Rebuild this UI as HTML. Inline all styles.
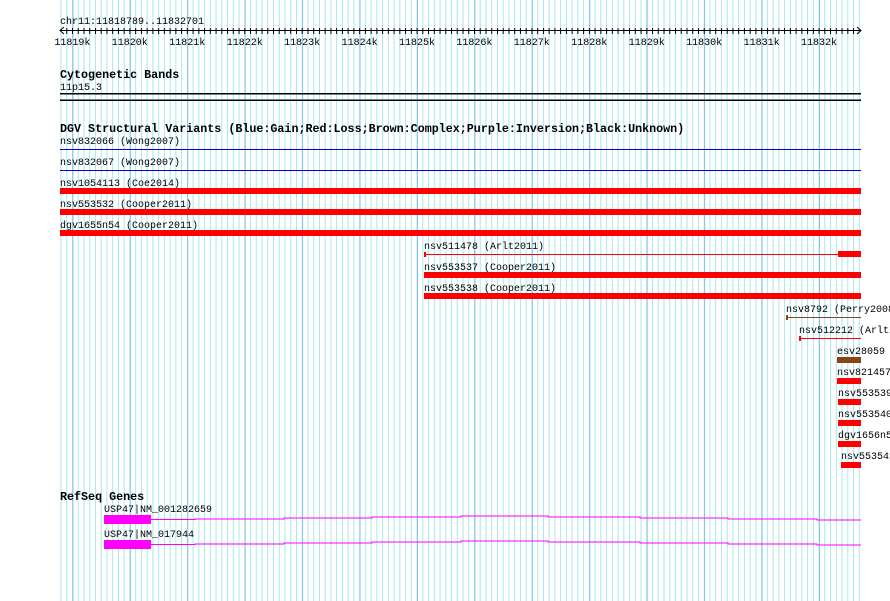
<!DOCTYPE html>
<html><head><meta charset="utf-8"><style>
html,body{margin:0;padding:0;background:#fff;width:890px;height:601px;overflow:hidden}
svg{display:block}
text{font-family:"Liberation Mono","DejaVu Sans Mono",monospace;font-size:10px;fill:#000}
.b{font-weight:bold;font-size:11.7px}
</style></head><body>
<svg width="890" height="601" xmlns="http://www.w3.org/2000/svg">
<defs>
<pattern id="mn" patternUnits="userSpaceOnUse" x="60.5" y="0" width="5.743" height="601"><rect x="0" y="0" width="1" height="601" fill="#a8e6ee"/></pattern>
<pattern id="mj" patternUnits="userSpaceOnUse" x="72.4" y="0" width="57.43" height="601"><rect x="0" y="0" width="1" height="601" fill="#86c2ec"/></pattern>
<pattern id="tk" patternUnits="userSpaceOnUse" x="60.5" y="0" width="5.743" height="40"><rect x="0" y="28" width="1" height="6" fill="#000"/></pattern>
</defs>
<rect x="59" y="0" width="802" height="601" fill="url(#mn)"/>
<rect x="59" y="0" width="802" height="601" fill="url(#mj)"/>
<!-- ruler -->
<text x="60" y="24">chr11:11818789..11832701</text>
<rect x="60" y="30" width="801" height="1" fill="#000"/>
<rect x="62" y="28" width="797" height="6" fill="url(#tk)"/>
<path d="M64 27 L60 30.5 L64 34 M857 27 L861 30.5 L857 34" stroke="#000" fill="none"/>
<g text-anchor="middle">
<text x="72.4" y="45">11819k</text><text x="129.8" y="45">11820k</text><text x="187.3" y="45">11821k</text><text x="244.7" y="45">11822k</text><text x="302.1" y="45">11823k</text><text x="359.6" y="45">11824k</text><text x="417" y="45">11825k</text><text x="474.4" y="45">11826k</text><text x="531.8" y="45">11827k</text><text x="589.3" y="45">11828k</text><text x="646.7" y="45">11829k</text><text x="704.1" y="45">11830k</text><text x="761.6" y="45">11831k</text><text x="819" y="45">11832k</text>
</g>
<!-- cytobands -->
<text class="b" x="60" y="78">Cytogenetic Bands</text>
<text x="60" y="90">11p15.3</text>
<rect x="60" y="93" width="801" height="1.5" fill="#000"/>
<rect x="60" y="99.5" width="801" height="1.5" fill="#000"/>
<!-- DGV -->
<text class="b" x="60" y="132">DGV Structural Variants (Blue:Gain;Red:Loss;Brown:Complex;Purple:Inversion;Black:Unknown)</text>
<text x="60" y="144">nsv832066 (Wong2007)</text>
<rect x="60" y="149" width="801" height="1" fill="#0000dd"/>
<text x="60" y="165">nsv832067 (Wong2007)</text>
<rect x="60" y="170" width="801" height="1" fill="#0000dd"/>
<text x="60" y="186">nsv1054113 (Coe2014)</text>
<rect x="60" y="188" width="801" height="6" fill="#f00"/>
<text x="60" y="207">nsv553532 (Cooper2011)</text>
<rect x="60" y="209" width="801" height="6" fill="#f00"/>
<text x="60" y="228">dgv1655n54 (Cooper2011)</text>
<rect x="60" y="230" width="801" height="6" fill="#f00"/>
<text x="424" y="249">nsv511478 (Arlt2011)</text>
<rect x="424" y="254" width="437" height="1" fill="#f00"/>
<rect x="424" y="252" width="2" height="5" fill="#f00"/>
<rect x="838" y="251" width="23" height="6" fill="#f00"/>
<text x="424" y="270">nsv553537 (Cooper2011)</text>
<rect x="424" y="272" width="437" height="6" fill="#f00"/>
<text x="424" y="291">nsv553538 (Cooper2011)</text>
<rect x="424" y="293" width="437" height="6" fill="#f00"/>
<text x="786" y="312">nsv8792 (Perry2008)</text>
<rect x="786" y="317" width="75" height="1" fill="#8b4513"/>
<rect x="786" y="315" width="2" height="5" fill="#8b4513"/>
<text x="799" y="333">nsv512212 (Arlt2011)</text>
<rect x="799" y="338" width="62" height="1" fill="#f00"/>
<rect x="799" y="336" width="2" height="5" fill="#f00"/>
<text x="837" y="354">esv28059</text>
<rect x="837" y="357" width="24" height="6" fill="#8b4513"/>
<text x="837" y="375">nsv821457</text>
<rect x="837" y="378" width="24" height="6" fill="#f00"/>
<text x="838" y="396">nsv553539</text>
<rect x="838" y="399" width="23" height="6" fill="#f00"/>
<text x="838" y="417">nsv553540</text>
<rect x="838" y="420" width="23" height="6" fill="#f00"/>
<text x="838" y="438">dgv1656n54</text>
<rect x="838" y="441" width="23" height="6" fill="#f00"/>
<text x="841" y="459">nsv553541</text>
<rect x="841" y="462" width="20" height="6" fill="#f00"/>
<!-- RefSeq -->
<text class="b" x="60" y="500">RefSeq Genes</text>
<text x="104" y="512">USP47|NM_001282659</text>
<rect x="104" y="515" width="47" height="9" fill="#f0f"/>
<path d="M151 519.5 H195 V519 H284 V518 H372 V517 H461 V516 H548 V517 H640 V518 H728 V519 H817 V520 H861" stroke="#f0f" fill="none" stroke-width="1"/>
<text x="104" y="537">USP47|NM_017944</text>
<rect x="104" y="540" width="47" height="9" fill="#f0f"/>
<path d="M151 544.5 H195 V544 H284 V543 H372 V542 H461 V541 H548 V542 H640 V543 H728 V544 H817 V545 H861" stroke="#f0f" fill="none" stroke-width="1"/>
</svg>
</body></html>
